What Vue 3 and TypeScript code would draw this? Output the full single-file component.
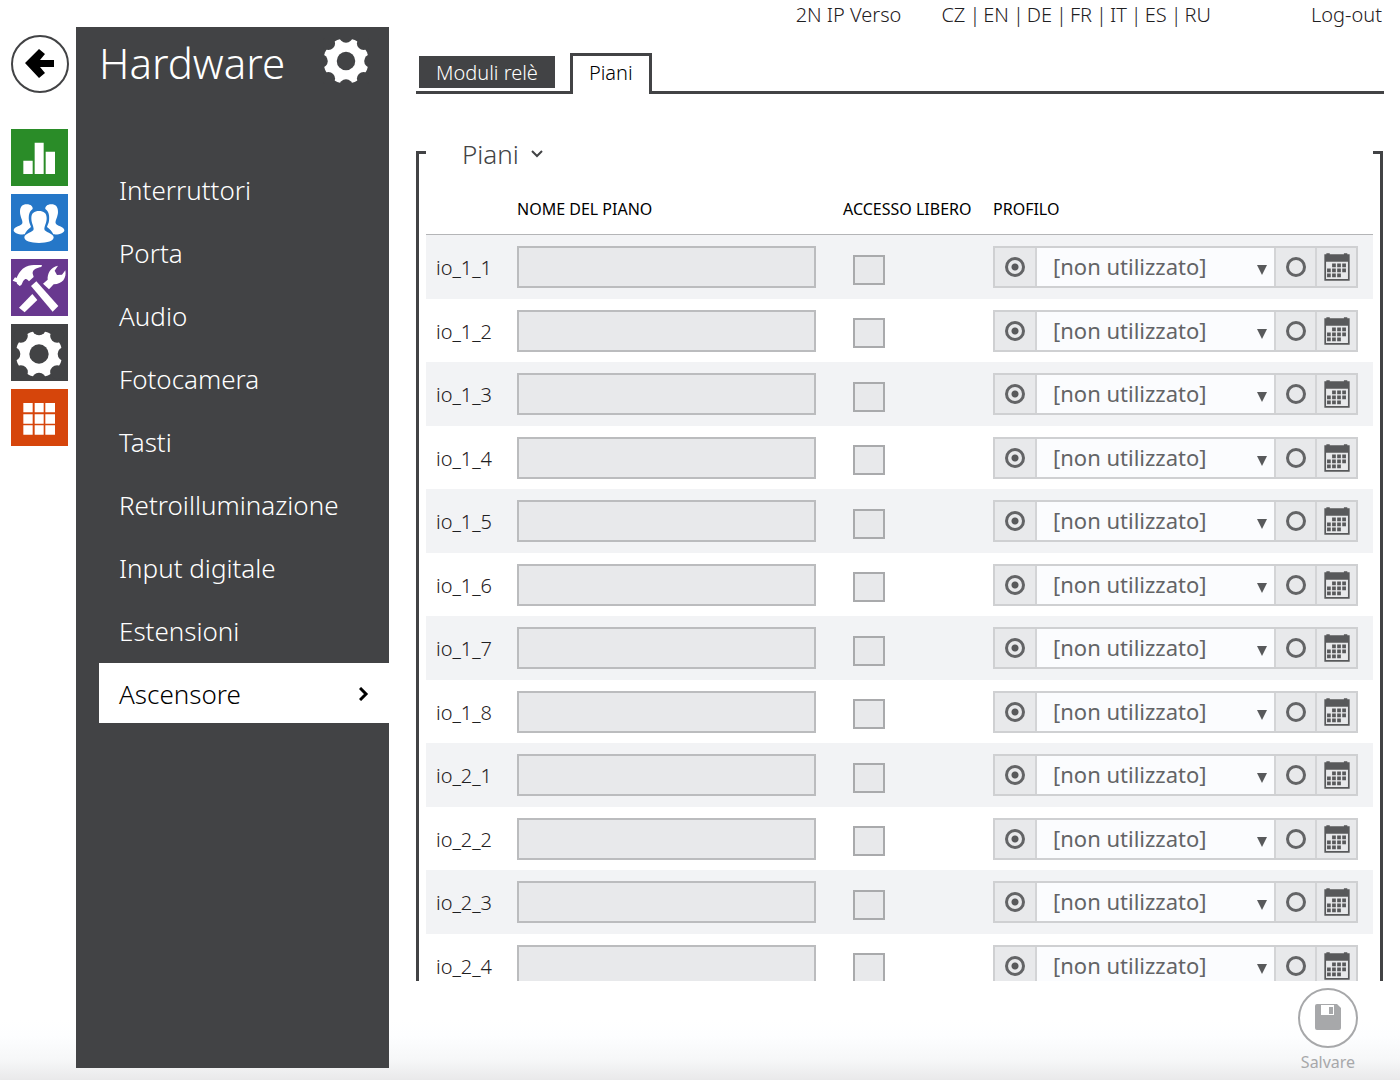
<script setup lang="ts">
import { ref } from 'vue'

interface Floor {
  id: string
  name: string
  free: boolean
  mode: 'profile' | 'calendar'
  profile: string
}

const languages = ['CZ', 'EN', 'DE', 'FR', 'IT', 'ES', 'RU']
const menu = [
  'Interruttori',
  'Porta',
  'Audio',
  'Fotocamera',
  'Tasti',
  'Retroilluminazione',
  'Input digitale',
  'Estensioni',
  'Ascensore',
]
const activeItem = ref('Ascensore')

const outputs: Record<number, number> = { 1: 8, 2: 4 }
const ids = Object.entries(outputs).flatMap(([module, count]) =>
  Array.from({ length: count }, (_, n) => `io_${module}_${n + 1}`),
)
const floors = ref<Floor[]>(
  ids.map((id) => ({ id, name: '', free: false, mode: 'profile', profile: '' })),
)

const notches = [0, 45, 90, 135, 180, 225, 270, 315]
</script>

<template>
  <div class="page">
    <nav class="rail" aria-label="Sezioni">
      <a class="back" href="#" aria-label="Indietro">
        <svg viewBox="0 0 58 58">
          <circle cx="29" cy="29" r="28" fill="#fff" stroke="#424345" stroke-width="2" />
          <path d="M14 28 28 14 34 19 29 25H43V32H29L34 38 28 43Z" fill="#000" />
        </svg>
      </a>
      <a class="tile green" href="#" aria-label="Stato">
        <svg viewBox="33 26 171 171" fill="#fff">
          <path d="M70 121h28v40H70zM104 67h27v94h-27zM137 94h28v67h-28z" />
        </svg>
      </a>
      <a class="tile blue" href="#" aria-label="Directory">
        <svg viewBox="33 220 171 171" fill="#fff">
          <g id="side-user">
            <path d="M60 274C60 258 67 251 80 251C93 251 99 258 98 265C88 272 85 284 87 300C88 308 92 314 93 319C84 326 77 333 74 341C58 343 40 337 41 328C43 318 64 316 67 308C69 300 60 288 60 274Z" />
          </g>
          <use href="#side-user" transform="translate(234 0) scale(-1 1)" />
          <path d="M94 292C94 277 103 271 117 271C131 271 140 277 140 292C140 308 133 316 133 325C133 335 160 337 161 350C161 361 142 367 117 367C92 367 73 361 73 350C74 337 101 335 101 325C101 316 94 308 94 292Z" />
        </svg>
      </a>
      <a class="tile purple" href="#" aria-label="Servizi">
        <svg viewBox="33 415 171 171" fill="#fff">
          <path d="M38 480 45 470 50 472C54 460 64 444 78 438C94 431 112 433 126 433L124 439C111 441 100 446 98 455C97 461 101 465 101 469L87 482C84 478 80 474 76 475C70 477 68 486 64 493L59 496 51 489 50 485Z" />
          <path d="M93 496 109 482 175 556 158 573Z" />
          <path d="M97 520 112 538 74 575 57 561Z" />
          <path d="M129 489 143 477C142 459 151 439 174 435L164 450 171 463 186 462 196 449C200 473 188 490 161 491L147 506Z" />
        </svg>
      </a>
      <a class="tile dark" href="#" aria-label="Hardware">
        <svg viewBox="33 24 171 171">
          <circle cx="117" cy="114" r="70" fill="#fff" />
          <circle cx="117" cy="114" r="29" fill="#424345" />
          <circle
            v-for="a in notches"
            :key="a"
            cx="117"
            cy="37"
            r="21"
            fill="#424345"
            :transform="`rotate(${a} 117 114)`"
          />
        </svg>
      </a>
      <a class="tile orange" href="#" aria-label="Sistema">
        <svg viewBox="33 219 171 171" fill="#fff">
          <path d="M70 261h28v28H70zM104 261h27v28h-27zM136 261h29v28h-29zM70 295h28v28H70zM104 295h27v28h-27zM136 295h29v28h-29zM70 328h28v28H70zM104 328h27v28h-27zM136 328h29v28h-29z" />
        </svg>
      </a>
    </nav>

    <aside class="sidebar">
      <div class="title">
        <h1>Hardware</h1>
        <svg class="gear" viewBox="45 42 144 144">
          <circle cx="117" cy="114" r="71" fill="#fff" />
          <circle cx="117" cy="114" r="29" fill="#424345" />
          <circle
            v-for="a in notches"
            :key="a"
            cx="117"
            cy="36"
            r="21"
            fill="#424345"
            :transform="`rotate(${a} 117 114)`"
          />
        </svg>
      </div>
      <ul class="menu">
        <li v-for="item in menu" :key="item">
          <a href="#" :class="{ active: item === activeItem }" @click.prevent="activeItem = item">
            <span>{{ item }}</span>
            <svg v-if="item === activeItem" class="chevron" viewBox="0 0 10 14">
              <path d="M1 1 7 7 1 13" fill="none" stroke="#000" stroke-width="3" />
            </svg>
          </a>
        </li>
      </ul>
    </aside>

    <main class="main">
      <header class="top">
        <span class="device">2N IP Verso</span>
        <nav class="langs" aria-label="Lingua">
          <template v-for="(l, i) in languages" :key="l">
            <span v-if="i" class="bar">|</span>
            <a href="#">{{ l }}</a>
          </template>
        </nav>
        <a class="logout" href="#">Log-out</a>
      </header>

      <div class="tabs">
        <button type="button" class="tab">Moduli relè</button>
        <button type="button" class="tab current">Piani</button>
      </div>

      <section class="panel">
        <div class="bracket left"></div>
        <div class="content">
          <h2>
            Piani
            <svg viewBox="0 0 12 8">
              <path d="M1 1 6 6 11 1" fill="none" stroke="#424345" stroke-width="2" />
            </svg>
          </h2>
          <table>
            <colgroup>
              <col class="c-id" />
              <col />
              <col class="c-free" />
              <col class="c-profile" />
            </colgroup>
            <thead>
              <tr>
                <th></th>
                <th>NOME DEL PIANO</th>
                <th>ACCESSO LIBERO</th>
                <th>PROFILO</th>
              </tr>
            </thead>
            <tbody>
              <tr v-for="f in floors" :key="f.id">
                <td class="id"><label :for="`${f.id}-name`">{{ f.id }}</label></td>
                <td><input :id="`${f.id}-name`" v-model="f.name" class="name" type="text" /></td>
                <td>
                  <input v-model="f.free" class="free" type="checkbox" :aria-label="`Accesso libero ${f.id}`" />
                </td>
                <td>
                  <div class="profile">
                    <label class="cell first">
                      <input v-model="f.mode" type="radio" value="profile" :name="`${f.id}-mode`" :aria-label="`Profilo ${f.id}`" />
                    </label>
                    <div class="pick">
                      <select v-model="f.profile" :aria-label="`Profilo utilizzato ${f.id}`">
                        <option value="">[non utilizzato]</option>
                      </select>
                      <svg viewBox="0 0 10 10"><path d="M0 0H10L5 10Z" fill="#58595b" /></svg>
                    </div>
                    <label class="cell">
                      <input v-model="f.mode" type="radio" value="calendar" :name="`${f.id}-mode`" :aria-label="`Calendario ${f.id}`" />
                    </label>
                    <button type="button" class="cell" aria-label="Apri calendario">
                      <svg class="calendar" viewBox="1028 56 77 83">
                        <path fill="#58595b" fill-rule="evenodd" d="M1029 60H1035V57H1045V60H1087V57H1097V60H1104V138H1029ZM1034 82V133H1099V82Z" />
                        <path fill="#58595b" d="M1052 87h11v11h-11zM1067 87h11v11h-11zM1082 87h11v11h-11zM1037 102h11v11h-11zM1052 102h11v11h-11zM1067 102h11v11h-11zM1082 102h11v11h-11zM1037 117h11v11h-11zM1052 117h11v11h-11zM1067 117h11v11h-11z" />
                      </svg>
                    </button>
                  </div>
                </td>
              </tr>
            </tbody>
          </table>
        </div>
        <div class="bracket right"></div>
      </section>

      <footer class="actions">
        <button type="button" class="save">
          <svg viewBox="0 0 62 62">
            <circle cx="31" cy="31" r="29" fill="#fff" stroke="#a7a8aa" stroke-width="2" />
            <path fill="#a7a8aa" fill-rule="evenodd" d="M20 17H40L44 21V41Q44 43 42 43H20Q18 43 18 41V19Q18 17 20 17ZM24 18V28H37V18ZM32 20H36V27H32Z" />
          </svg>
          <span>Salvare</span>
        </button>
      </footer>
    </main>
  </div>
</template>

<style>
body {
  margin: 0;
}
</style>

<style scoped>
* {
  box-sizing: border-box;
}

.page {
  display: flex;
  height: 100vh;
  overflow: hidden;
  font-family: 'Noto Sans', 'Open Sans', sans-serif;
  font-weight: 300;
  color: #1f2022;
  background: linear-gradient(to top, #e9e9ea 0, #f6f7f8 20px, #fdfeff 44px, #fff 60px);
}

a {
  color: inherit;
  text-decoration: none;
}

button,
input,
select {
  margin: 0;
  font: inherit;
}

svg {
  display: block;
}

.rail {
  display: flex;
  flex: none;
  flex-direction: column;
  gap: 8px;
  width: 76px;
  padding: 35px 7px 0 11px;
}

.back {
  width: 58px;
  height: 58px;
  margin-bottom: 28px;
}

.tile {
  width: 57px;
  height: 57px;
}

.green { background: #2a8c28; }
.blue { background: #2577c8; }
.purple { background: #68388f; }
.dark { background: #424345; }
.orange { background: #d6450b; }

.sidebar {
  flex: none;
  width: 313px;
  margin: 27px 0 12px;
  color: #fff;
  background: #424345;
}

.title {
  display: flex;
  justify-content: space-between;
  height: 72px;
  margin-bottom: 60px;
  padding: 0 20px 0 23px;
}

.title h1 {
  margin: 0;
  font-size: 42px;
  font-weight: 300;
  line-height: 72px;
}

.gear {
  width: 46px;
  height: 46px;
  margin-top: 11px;
}

.menu {
  display: flex;
  flex-direction: column;
  gap: 3px;
  margin: 0;
  padding: 0 0 0 23px;
  list-style: none;
}

.menu a {
  display: flex;
  align-items: center;
  justify-content: space-between;
  height: 60px;
  padding: 2px 20px 0;
  font-size: 26px;
}

.menu a.active {
  color: #000;
  background: #fff;
}

.chevron {
  width: 10px;
  height: 14px;
}

.main {
  display: flex;
  flex: 1;
  flex-direction: column;
  min-width: 0;
  padding: 0 16px 0 27px;
}

.top {
  display: flex;
  flex: none;
  justify-content: flex-end;
  height: 53px;
  padding-right: 2px;
  font-size: 20px;
  line-height: 30px;
  white-space: nowrap;
}

.langs {
  display: flex;
  margin: 0 100px 0 40px;
}

.bar {
  margin: 0 3px 0 4px;
}

.tabs {
  display: flex;
  flex: none;
  align-items: flex-start;
  height: 41px;
  padding-left: 3px;
  border-bottom: 3px solid #424345;
}

.tab {
  height: 32px;
  margin-top: 3px;
  padding: 0 17px;
  border: 0;
  font-size: 20px;
  line-height: 34px;
  color: #fff;
  background: #424345;
}

.tab.current {
  height: 41px;
  margin: 0 0 0 15px;
  padding: 0 16px 5px;
  border: 3px solid #424345;
  border-bottom: 0;
  color: #000;
  background: #fff;
}

.panel {
  display: flex;
  flex: 1;
  min-height: 0;
  margin: 42px 1px 0 0;
  overflow: hidden;
}

.bracket {
  flex: none;
  width: 10px;
  margin-top: 15px;
  border-top: 3px solid #424345;
}

.left { border-left: 3px solid #424345; }
.right { border-right: 3px solid #424345; }

.content {
  flex: 1;
  min-width: 0;
}

h2 {
  display: flex;
  align-items: center;
  gap: 12px;
  height: 36px;
  margin: 0;
  padding-left: 36px;
  font-size: 26px;
  font-weight: 300;
  color: #424345;
}

h2 svg {
  width: 12px;
  height: 8px;
}

table {
  width: 100%;
  table-layout: fixed;
  border-collapse: separate;
  border-spacing: 0;
}

.c-id { width: 91px; }
.c-free { width: 150px; }
.c-profile { width: 380px; }

th {
  height: 63px;
  padding: 12px 0 0;
  border-bottom: 1px solid #b4b5b7;
  font-size: 16px;
  font-weight: 400;
  text-align: left;
  white-space: nowrap;
  color: #000;
}

td {
  height: 63px;
  padding: 0;
}

tbody tr:nth-child(odd) td {
  height: 64px;
  background: #f2f3f5;
}

.id {
  padding: 1px 0 0 10px;
  font-size: 20px;
}

.name {
  display: block;
  width: calc(100% - 27px);
  height: 42px;
  padding: 0 8px;
  border: 2px solid #bbbcbe;
  border-radius: 0;
  background: #e8e9eb;
}

.free {
  display: block;
  width: 32px;
  height: 30px;
  margin: 5px 0 0 10px;
  appearance: none;
  border: 2px solid #a9aaac;
  background: #e8e9eb;
}

.profile {
  display: flex;
  width: 365px;
  height: 42px;
  border: 2px solid #cfd0d2;
  background: #e8e9eb;
}

.cell {
  display: flex;
  flex: none;
  align-items: center;
  justify-content: center;
  width: 41px;
  padding: 0;
  border: 0 solid #d3d4d6;
  border-left-width: 2px;
  background: none;
}

.cell.first {
  width: 42px;
  border-width: 0 2px 0 0;
}

.cell input {
  width: 20px;
  height: 20px;
  appearance: none;
  border: 3px solid #636466;
  border-radius: 50%;
}

.cell input:checked {
  background: radial-gradient(circle, #58595b 3px, transparent 4px);
}

.calendar {
  width: 26px;
  height: 28px;
}

.pick {
  position: relative;
  flex: 1;
}

.pick select {
  display: block;
  width: 100%;
  height: 38px;
  padding: 0 16px 2px;
  appearance: none;
  border: 0;
  border-radius: 0;
  font-size: 22px;
  font-weight: 400;
  color: #636466;
  background: #fbfcfe;
}

.pick svg {
  position: absolute;
  top: 17px;
  right: 7px;
  width: 10px;
  height: 10px;
  pointer-events: none;
}

.actions {
  display: flex;
  flex: none;
  justify-content: flex-end;
  height: 99px;
  padding: 6px 25px 0 0;
}

.save {
  display: flex;
  flex-direction: column;
  align-items: center;
  align-self: flex-start;
  padding: 0;
  border: 0;
  font-size: 16px;
  font-weight: 400;
  line-height: 26px;
  color: #a7a8aa;
  background: none;
}

.save svg {
  width: 62px;
  height: 62px;
}
</style>
